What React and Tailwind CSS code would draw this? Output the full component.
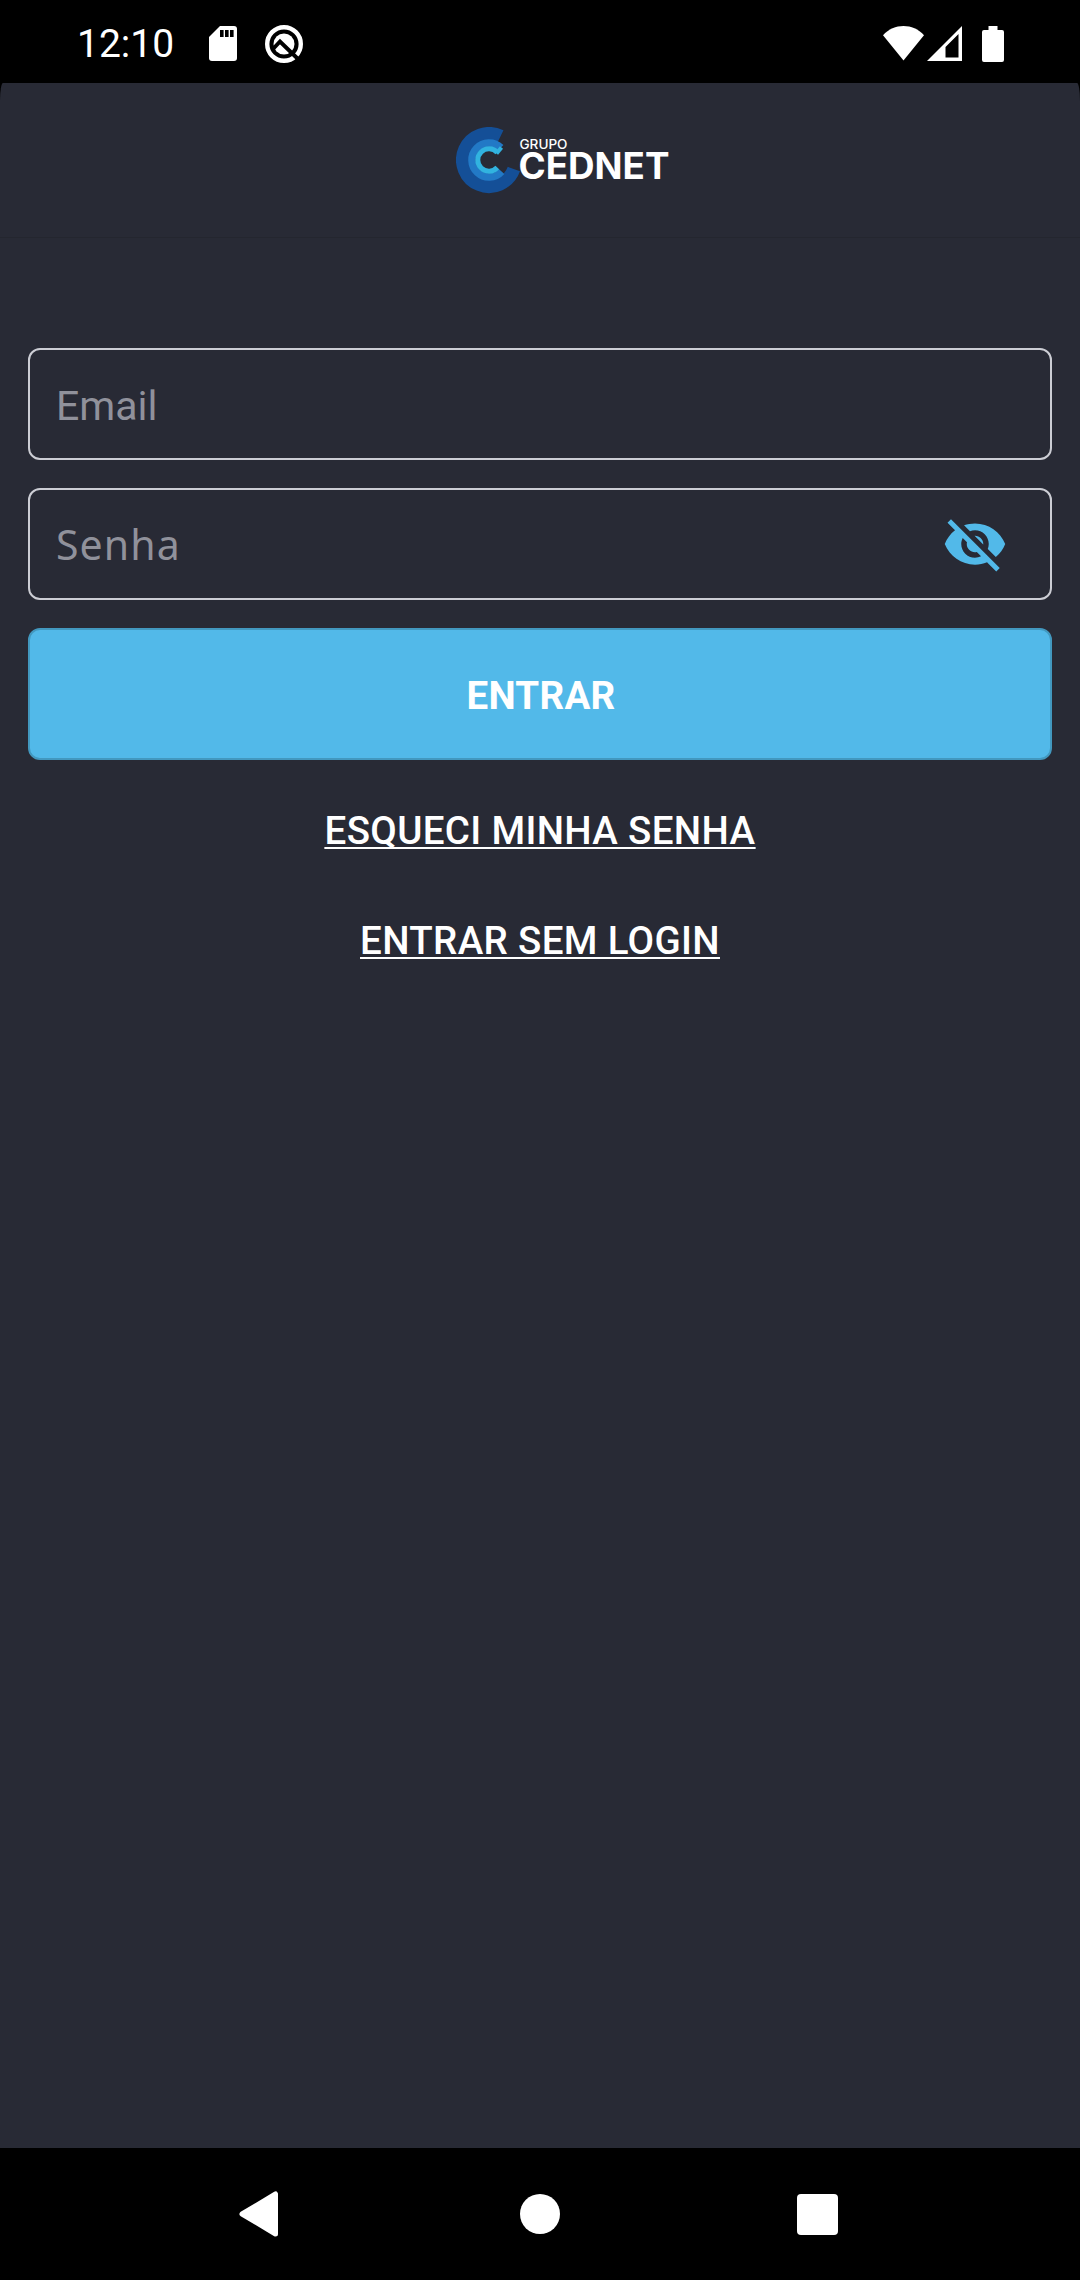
import React, { useState } from 'react';

const StatusBar = () => (
  <div className="h-[83px] bg-black flex items-center justify-between pl-[77px] pr-[76px] pt-1">
    <div className="flex items-center">
      <span className="w-[132px] pt-[2px] text-[39px] leading-none text-white">12:10</span>
      <svg width="28" height="35" viewBox="0 0 28 35" className="shrink-0">
        <path fill="#fff" d="M11 0H25a3 3 0 0 1 3 3V32a3 3 0 0 1-3 3H3a3 3 0 0 1-3-3V11Z" />
        <path fill="#000" d="M11 4h3.6v7H11zM16 4h3.6v7H16zM21 4h3.6v7H21z" />
      </svg>
      <svg width="38" height="38" viewBox="0 0 38 38" className="ml-7 shrink-0">
        <circle cx="19" cy="19" r="16.8" fill="none" stroke="#fff" strokeWidth="4.4" />
        <circle cx="19" cy="19" r="10.5" fill="#fff" />
        <path d="M8 24 15 16.5 33 34" fill="none" stroke="#000" strokeWidth="4" />
      </svg>
    </div>
    <div className="flex items-center">
      <svg width="41" height="35" viewBox="0 0 41 35">
        <path fill="#fff" d="M0 9.3C11-3 30-3 41 9.3L20.5 34.5Z" />
      </svg>
      <svg width="35" height="35" viewBox="0 0 35 35" className="ml-[3px]">
        <path fill="#fff" fillRule="evenodd" d="M35 0V35H0ZM31.5 8 18.5 21V31.5H31.5Z" />
      </svg>
      <svg width="22" height="36" viewBox="0 0 22 36" className="ml-[20px]">
        <path fill="#fff" d="M6.5 0h9v4H20a2 2 0 0 1 2 2V34a2 2 0 0 1-2 2H2a2 2 0 0 1-2-2V6a2 2 0 0 1 2-2H6.5Z" />
      </svg>
    </div>
  </div>
);

const Logo = () => (
  <svg width="216" height="68" viewBox="0 0 216 68">
    <g fill="none">
      <path stroke="#144f97" strokeWidth="13" d="M44.6 9.2A26.5 26.5 0 1 0 57.9 42.1" />
      <path stroke="#2279c6" strokeWidth="7.5" d="M44.8 20.8A17 17 0 1 0 45.6 44.4" />
      <path stroke="#31b3e0" strokeWidth="5" d="M41.3 25.5A11.2 11.2 0 1 0 41.3 40.5" />
      <path stroke="#31b3e0" strokeWidth="4" d="M40.5 26.5 45.5 20.5" />
    </g>
    <g fill="#fff" className="font-['Inter',sans-serif]">
      <text x="63.5" y="22.3" fontSize="13" fontWeight="500" textLength="48" lengthAdjust="spacingAndGlyphs">GRUPO</text>
      <text x="62.5" y="51.7" fontSize="36.7" fontWeight="700" textLength="151" lengthAdjust="spacingAndGlyphs">CEDNET</text>
    </g>
  </svg>
);

const EyeOff = () => (
  <svg width="66" height="66" viewBox="0 0 24 24" fill="#52b9e9">
    <path d="M12 7c2.76 0 5 2.24 5 5 0 .65-.13 1.26-.36 1.83l2.92 2.92c1.51-1.26 2.7-2.89 3.43-4.75-1.73-4.39-6-7.5-11-7.5-1.4 0-2.74.25-3.98.7l2.16 2.16C10.74 7.13 11.35 7 12 7zM2 4.27l2.28 2.28.46.46C3.08 8.3 1.78 10.02 1 12c1.73 4.39 6 7.5 11 7.5 1.55 0 3.03-.3 4.38-.84l.42.42L19.73 22 21 20.73 3.27 3 2 4.27zM7.53 9.8l1.55 1.55c-.05.21-.08.43-.08.65 0 1.66 1.34 3 3 3 .22 0 .44-.03.65-.08l1.55 1.55c-.67.33-1.41.53-2.2.53-2.76 0-5-2.24-5-5 0-.79.2-1.53.53-2.2zm4.31-.78 3.15 3.15.02-.16c0-1.66-1.34-3-3-3l-.17.01z" />
  </svg>
);

const NavBar = () => (
  <div className="h-[132px] bg-black flex items-center pl-[239px]">
    <svg width="40" height="46" viewBox="0 0 40 46">
      <path d="M3 23 36.5 3V43Z" fill="#fff" stroke="#fff" strokeWidth="5" strokeLinejoin="round" />
    </svg>
    <div className="ml-[241px] w-10 h-10 rounded-full bg-white" />
    <div className="ml-[237px] w-[41px] h-[41px] rounded-[4px] bg-white" />
  </div>
);

export default function App() {
  const [email, setEmail] = useState('');
  const [senha, setSenha] = useState('');
  const [visible, setVisible] = useState(false);

  return (
    <div className="w-[1080px] h-[2280px] flex flex-col bg-black font-['Roboto',sans-serif]">
      <StatusBar />
      <div className="flex-1 flex flex-col bg-[#282a35] rounded-t-[3px_18px]">
        <header className="h-[155px] flex justify-center items-center pl-[48px] pt-px border-b border-[#24262f]">
          <Logo />
        </header>

        <form className="px-7 pt-[110px] flex flex-col" onSubmit={(e) => e.preventDefault()}>
          <input value={email} onChange={(e) => setEmail(e.target.value)} placeholder="Email"
            className="h-28 w-full border-2 border-[#cccdd4] rounded-xl px-[26px] pt-1 text-[41px] text-white placeholder:text-[#90919b] outline-none" />
          <div className="mt-7 h-28 flex items-center border-2 border-[#cccdd4] rounded-xl pl-[26px] pr-[42px]">
            <input type={visible ? 'text' : 'password'} value={senha} onChange={(e) => setSenha(e.target.value)} placeholder="Senha"
              className="flex-1 min-w-0 pt-[2px] text-[41px] tracking-[1.1px] text-white placeholder:text-[#90919b] outline-none font-['Noto_Sans',sans-serif]" />
            <button type="button" onClick={() => setVisible(!visible)}><EyeOff /></button>
          </div>
          <button type="submit" className="mt-7 h-[132px] bg-[#52b9e9] border-2 border-[#4298bf] rounded-xl text-[38.5px] tracking-[0.3px] font-bold text-white pt-1 pl-[2px]">ENTRAR</button>
        </form>

        <div className="flex flex-col items-center mt-[48px] gap-[65px] text-[38.5px] tracking-[0.34px] leading-[45px] font-medium text-white underline decoration-2 underline-offset-[3px] [text-decoration-skip-ink:none]">
          <a href="#senha">ESQUECI MINHA SENHA</a>
          <a href="#visitante">ENTRAR SEM LOGIN</a>
        </div>
      </div>
      <NavBar />
    </div>
  );
}
